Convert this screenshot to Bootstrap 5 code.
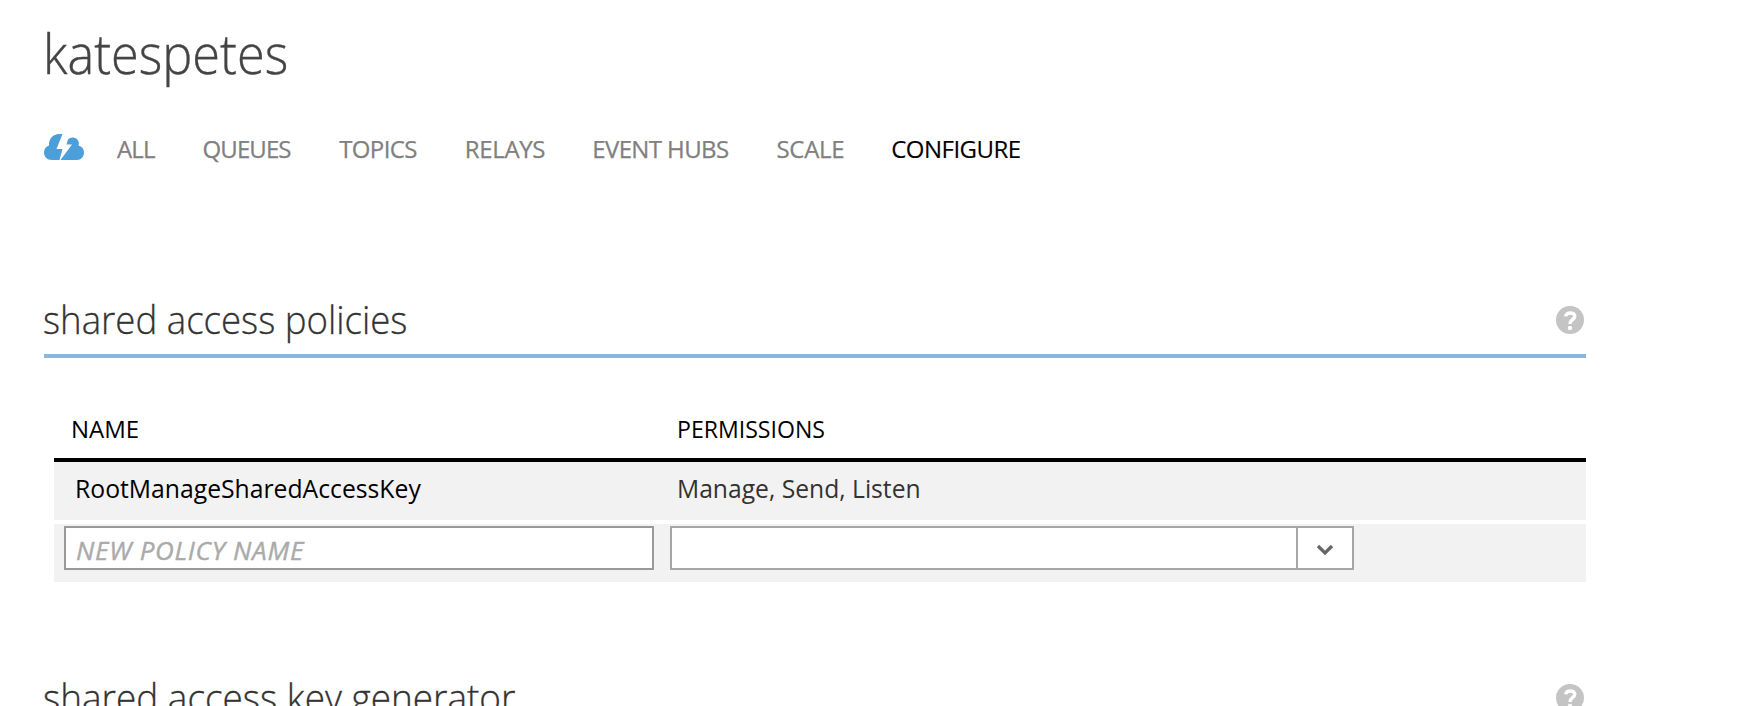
<!DOCTYPE html>
<html lang="en">
<head>
<meta charset="utf-8">
<title>katespetes</title>
<meta name="viewport" content="width=device-width, initial-scale=1">
<link href="https://cdn.jsdelivr.net/npm/bootstrap@5.3.0/dist/css/bootstrap.min.css" rel="stylesheet">
<style>
body{font-family:"Open Sans",sans-serif;color:#333;background:#fff;overflow:hidden;height:706px}
.page-wrap{width:1542px;margin-left:44px;padding-top:15px}
.squeeze{display:inline-block;transform-origin:0 50%;white-space:nowrap}
.page-title{font-size:55px;line-height:75px;font-weight:300;color:#444;-webkit-text-stroke:.4px #444}
.page-title .squeeze{transform:scaleX(.918);margin-left:-1px}
.tabs-row{height:32px;margin:43px 0 131px;font-size:24px;line-height:32px}
.tabs-row .nav-link{padding:0;color:#808080;white-space:nowrap;letter-spacing:-.6px;-webkit-text-stroke:.25px #808080}
.tabs-row .nav-link.active{color:#000;letter-spacing:-.5px;-webkit-text-stroke:.15px #000}
.tabs-row .nav-item{margin-right:47px}
.tabs-row .nav-item:nth-child(1) .nav-link{letter-spacing:-.9px}
.tabs-row .nav-item:nth-child(1){margin-right:48px}
.tabs-row .nav-item:nth-child(2) .nav-link{letter-spacing:-.9px}
.tabs-row .nav-item:nth-child(2){margin-right:48.5px}
.tabs-row .nav-item:nth-child(3){margin-right:48px}
.tabs-row .nav-item:nth-child(5){margin-right:48px}
.tabs-row .nav-item:nth-child(4) .nav-link,.tabs-row .nav-item:nth-child(6) .nav-link{letter-spacing:-.35px}
.cloud{width:40px;height:26px;margin:1px 33px 5px 0}
.config-section{height:378px}
.section-head{height:62px;border-bottom:4px solid #86b7e0}
.section-head h2{font-size:39px;line-height:50px;font-weight:300;color:#333;margin:-2px 0 0 -1px;-webkit-text-stroke:.3px #333}
.section-head .squeeze{transform:scaleX(.939)}
.section-head .squeeze.wider{transform:scaleX(.947)}
.help{width:28px;height:28px;margin:10px 2px 0 0}
.policies{margin:42px 0 0 10px}
.policy-head{height:62px;border-bottom:4px solid #000;color:#000;font-size:24px;line-height:32px;padding-top:13px}
.policy-row{height:58px;background:#f2f2f2;font-size:26px;line-height:36px}
.policy-row+.policy-row{margin-top:4px}
.name-col{width:606px;flex:none}
.policy-head .name-col{padding-left:17px}
.policy-head .squeeze{transform:scaleX(.962)}
.saved{padding-top:8px}
.saved .name-col{padding-left:21px;color:#000}
.saved .squeeze{transform:scaleX(.951)}
.perm-col{padding-left:17px}
.saved .perm-col .squeeze{transform:scaleX(.948)}
.entry{padding:2px 0 0 10px}
.policy-input,.policy-combo{height:44px;border:2px solid #999;border-radius:0;background:#fff}
.policy-input{width:590px;padding:4px 0 0 10px;font-size:26px;line-height:36px;font-style:italic;color:#333}
.policy-input::placeholder{color:#aaa;opacity:1;letter-spacing:.75px;-webkit-text-stroke:.4px #aaa}
.policy-combo{width:684px;margin-left:16px;border-color:#a6a6a6}
.combo-button{width:56px;border:0;border-left:2px solid #a6a6a6;background:#fff;padding:3px 0 0}
</style>
</head>
<body>
<main class="page-wrap">
  <h1 class="page-title m-0"><span class="squeeze">katespetes</span></h1>
  <nav class="tabs-row d-flex">
    <svg class="cloud flex-shrink-0" viewBox="0 0 40 26" aria-hidden="true">
      <path fill="#4d9fdb" d="M8 26C3 26 0 22.500 0 18.500C0 15 2 12.500 5 11.500C4.500 5 9 0 15 0H18.500L12.500 15H18.500L15.500 26Z"/>
      <path fill="#4d9fdb" d="M16.500 26L28 10.500H22.500L24 5.500C27 2 33 3 34.500 7.500C35 9 35 10 34.500 11.500C38 12.500 40 15 40 18.500C40 22.500 37 26 33 26Z"/>
    </svg>
    <ul class="nav flex-nowrap">
      <li class="nav-item"><a class="nav-link" href="#">ALL</a></li>
      <li class="nav-item"><a class="nav-link" href="#">QUEUES</a></li>
      <li class="nav-item"><a class="nav-link" href="#">TOPICS</a></li>
      <li class="nav-item"><a class="nav-link" href="#">RELAYS</a></li>
      <li class="nav-item"><a class="nav-link" href="#">EVENT HUBS</a></li>
      <li class="nav-item"><a class="nav-link" href="#">SCALE</a></li>
      <li class="nav-item"><a class="nav-link active" href="#">CONFIGURE</a></li>
    </ul>
  </nav>

  <section class="config-section">
    <div class="section-head d-flex justify-content-between">
      <h2><span class="squeeze">shared access policies</span></h2>
      <svg class="help" viewBox="0 0 28 28" role="img" aria-label="Help"><circle cx="14" cy="14" r="14" fill="#c4c4c4"/><path d="M9.700 10.300C10 5.800 18.800 5.800 18.800 10.300C18.800 13.500 14 13.500 14 18" fill="none" stroke="#fff" stroke-width="3.400"/><circle cx="14" cy="22" r="2.200" fill="#fff"/></svg>
    </div>
    <div class="policies">
      <div class="policy-head d-flex">
        <div class="name-col">NAME</div>
        <div class="perm-col"><span class="squeeze">PERMISSIONS</span></div>
      </div>
      <div class="policy-row saved d-flex">
        <div class="name-col"><span class="squeeze">RootManageSharedAccessKey</span></div>
        <div class="perm-col"><span class="squeeze">Manage, Send, Listen</span></div>
      </div>
      <div class="policy-row entry d-flex">
        <input class="policy-input form-control flex-shrink-0" type="text" placeholder="NEW POLICY NAME">
        <div class="policy-combo d-flex justify-content-end">
          <button class="combo-button d-flex align-items-center justify-content-center" type="button" aria-label="Choose permissions">
            <svg width="18" height="12" viewBox="0 0 18 12"><path d="M2 2L9 9L16 2" fill="none" stroke="#666" stroke-width="3.200"/></svg>
          </button>
        </div>
      </div>
    </div>
  </section>

  <section class="config-section">
    <div class="section-head d-flex justify-content-between">
      <h2><span class="squeeze wider">shared access key generator</span></h2>
      <svg class="help" viewBox="0 0 28 28" role="img" aria-label="Help"><circle cx="14" cy="14" r="14" fill="#c4c4c4"/><path d="M9.700 10.300C10 5.800 18.800 5.800 18.800 10.300C18.800 13.500 14 13.500 14 18" fill="none" stroke="#fff" stroke-width="3.400"/><circle cx="14" cy="22" r="2.200" fill="#fff"/></svg>
    </div>
  </section>
</main>
<script src="https://cdn.jsdelivr.net/npm/bootstrap@5.3.0/dist/js/bootstrap.bundle.min.js"></script>
</body>
</html>
